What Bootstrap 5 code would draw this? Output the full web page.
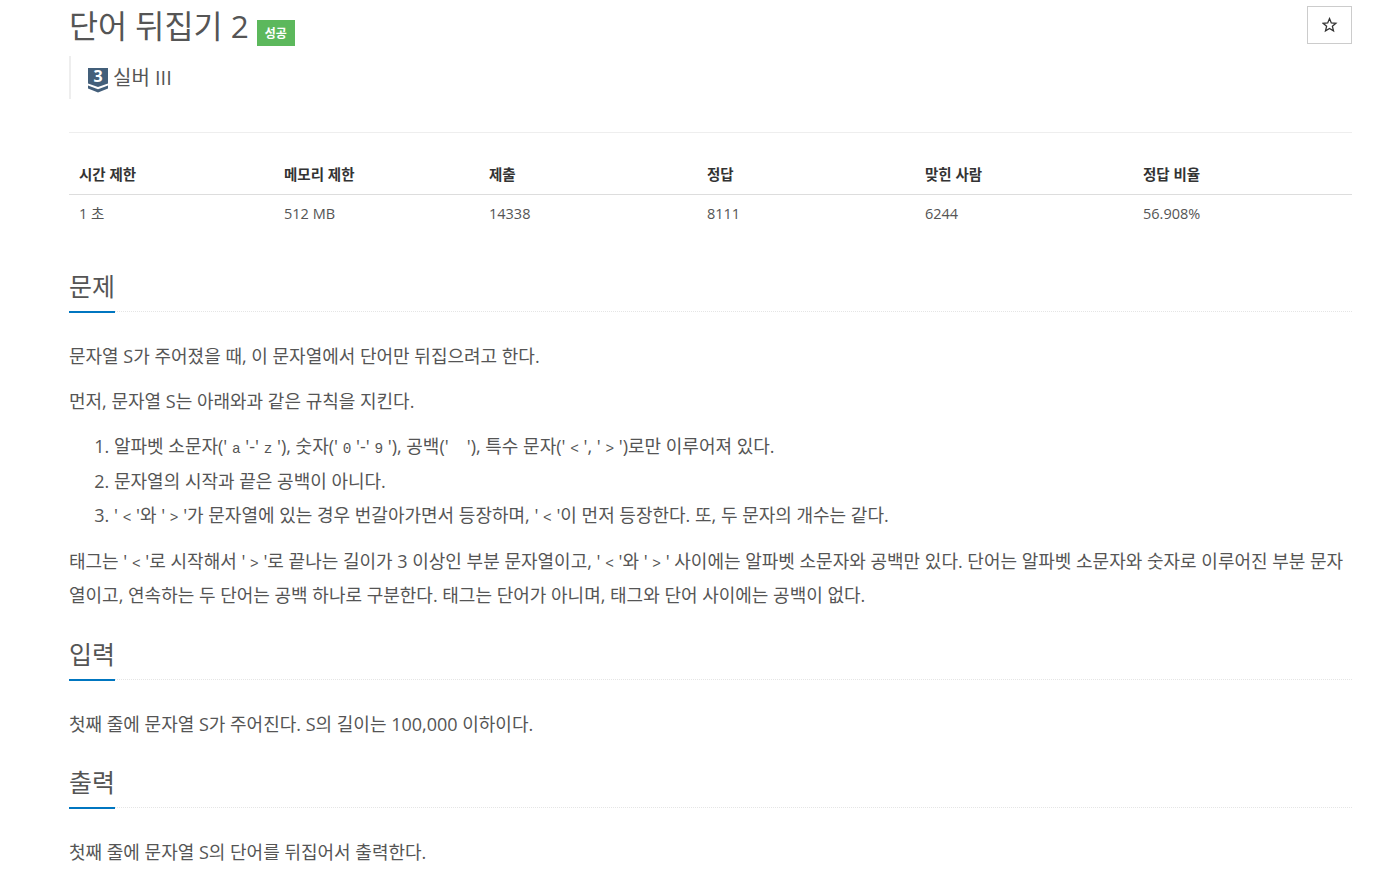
<!DOCTYPE html>
<html lang="ko">
<head>
  <meta charset="utf-8">
  <title>단어 뒤집기 2</title>
  <link rel="stylesheet" href="https://cdn.jsdelivr.net/npm/bootstrap@5.3.0/dist/css/bootstrap.min.css">
  <style>
    body { font-family: "Open Sans", "Noto Sans CJK KR", sans-serif; color: #555; font-size: 18px; background: #fff; }
    .page-wrap { margin-left: 69px; width: 1283px; }
    .title-row { height: 133px; border-bottom: 1px solid #eee; padding-top: 1px; }
    .prob-title { font-size: 31.6px; font-weight: 400; line-height: 50px; color: #555; margin: 0; }
    .result-tag { background: #5cb85c; color: #fff; font-size: 12px; font-weight: 700; width: 38px; height: 26px; line-height: 27px; text-align: center; margin-left: 8px; margin-top: 19px; }
    .star-btn { width: 45px; height: 38px; border: 1px solid #ccc; background: #fff; margin-top: 5px; padding: 0; }
    .tier-box { border-left: 2px solid #eee; height: 43px; margin-top: 5px; padding-left: 17px; padding-top: 8px; font-size: 20px; line-height: 28px; }
    .tier-box svg { display: block; margin-right: 5px; flex: none; }
    .info-table { width: 100%; margin-top: 22px; font-size: 14.5px; table-layout: fixed; border-collapse: collapse; }
    .info-table th { font-weight: 700; padding: 9px 10px 8px; line-height: 22px; border-bottom: 1px solid #ddd; color: #333; }
    .info-table td { padding: 7px 10px 9px; line-height: 24px; color: #555; }
    .sec-head { border-bottom: 1px dotted #e5e5e5; height: 42px; margin-top: 24.8px; margin-bottom: 27px; }
    .sec-head h2 { display: block; font-size: 25px; font-weight: 400; line-height: 32px; height: 43px; color: #555; margin: 0; border-bottom: 2px solid #0076c0; width: 46px; white-space: nowrap; }
    .first-head { margin-top: 35px; }
    .prob-text { line-height: 34.2px; margin: 0 0 10.8px; }
    .prob-text.last-para { margin-bottom: 25.8px; }
    .prob-list { margin: 0 0 11px; padding-left: 45px; line-height: 34.5px; }
    .prob-text code, .prob-list code { font-family: "Liberation Mono", monospace; font-size: 14.4px; line-height: 1; color: #555; padding: 0 4.7px; }
  </style>
</head>
<body>
  <div class="page-wrap">
    <div class="title-row">
      <div class="d-flex justify-content-between align-items-start">
        <div class="d-flex align-items-start">
          <h1 class="prob-title">단어 뒤집기 2</h1>
          <span class="result-tag">성공</span>
        </div>
        <button class="star-btn d-flex align-items-center justify-content-center" type="button" aria-label="별표">
          <svg width="16" height="16" viewBox="0 0 16 16"><path d="M7.500 1.600l1.800 4.300 4.600.4-3.500 3 1.100 4.600-4-2.500-4 2.500 1.100-4.600-3.500-3 4.600-.4z" fill="none" stroke="#333" stroke-width="1.300"/></svg>
        </button>
      </div>
      <div class="tier-box d-flex">
        <svg width="20" height="29" viewBox="0 -4 20 29">
          <path d="M0 0h20v15.500l-10 3.500-10-3.500z" fill="#435f7a"/>
          <path d="M0 17.500l10 3.700 10-3.700v3l-10 4-10-4z" fill="#435f7a"/>
          <text x="10" y="14" text-anchor="middle" font-family="Open Sans" font-size="16" font-weight="700" fill="#fff">3</text>
        </svg>
        <span>실버 III</span>
      </div>
    </div>

    <table class="info-table">
      <colgroup><col style="width:205px"><col style="width:205px"><col style="width:218px"><col style="width:218px"><col style="width:218px"><col></colgroup>
      <thead>
        <tr><th>시간 제한</th><th>메모리 제한</th><th>제출</th><th>정답</th><th>맞힌 사람</th><th>정답 비율</th></tr>
      </thead>
      <tbody>
        <tr><td>1 초</td><td>512 MB</td><td>14338</td><td>8111</td><td>6244</td><td>56.908%</td></tr>
      </tbody>
    </table>

    <div class="sec-head first-head"><h2>문제</h2></div>
    <p class="prob-text">문자열 S가 주어졌을 때, 이 문자열에서 단어만 뒤집으려고 한다.</p>
    <p class="prob-text">먼저, 문자열 S는 아래와과 같은 규칙을 지킨다.</p>
    <ol class="prob-list">
      <li>알파벳 소문자('<code>a</code>'-'<code>z</code>'), 숫자('<code>0</code>'-'<code>9</code>'), 공백('<code> </code>'), 특수 문자('<code>&lt;</code>', '<code>&gt;</code>')로만 이루어져 있다.</li>
      <li>문자열의 시작과 끝은 공백이 아니다.</li>
      <li>'<code>&lt;</code>'와 '<code>&gt;</code>'가 문자열에 있는 경우 번갈아가면서 등장하며, '<code>&lt;</code>'이 먼저 등장한다. 또, 두 문자의 개수는 같다.</li>
    </ol>
    <p class="prob-text last-para">태그는 '<code>&lt;</code>'로 시작해서 '<code>&gt;</code>'로 끝나는 길이가 3 이상인 부분 문자열이고, '<code>&lt;</code>'와 '<code>&gt;</code>' 사이에는 알파벳 소문자와 공백만 있다. 단어는 알파벳 소문자와 숫자로 이루어진 부분 문자열이고, 연속하는 두 단어는 공백 하나로 구분한다. 태그는 단어가 아니며, 태그와 단어 사이에는 공백이 없다.</p>

    <div class="sec-head"><h2>입력</h2></div>
    <p class="prob-text">첫째 줄에 문자열 S가 주어진다. S의 길이는 100,000 이하이다.</p>

    <div class="sec-head"><h2>출력</h2></div>
    <p class="prob-text">첫째 줄에 문자열 S의 단어를 뒤집어서 출력한다.</p>
  </div>
  <script src="https://cdn.jsdelivr.net/npm/bootstrap@5.3.0/dist/js/bootstrap.bundle.min.js"></script>
</body>
</html>
